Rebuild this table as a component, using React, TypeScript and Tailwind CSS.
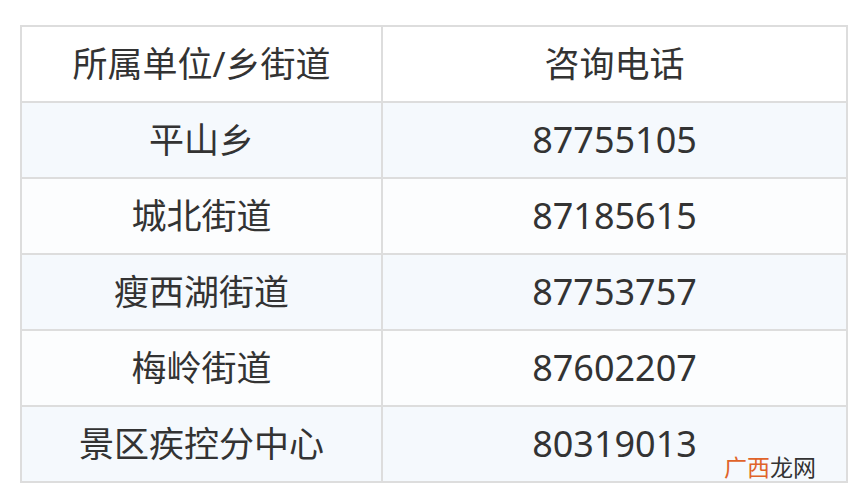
const rows = [
  { unit: "平山乡", phone: "87755105" },
  { unit: "城北街道", phone: "87185615" },
  { unit: "瘦西湖街道", phone: "87753757" },
  { unit: "梅岭街道", phone: "87602207" },
  { unit: "景区疾控分中心", phone: "80319013" },
];

export default function App() {
  return (
    <div className="relative h-[499px] w-[853px] bg-white pl-[20px] pt-[25px] font-['Noto_Sans','Noto_Sans_CJK_SC',sans-serif] text-[#333]">
      <table className="w-[828px] table-fixed border-collapse text-center text-[35px]">
        <colgroup>
          <col className="w-[361px]" />
          <col />
        </colgroup>
        <thead>
          <tr className="h-[76px] bg-white">
            <th className="border-2 border-[#dddddd] font-normal">所属单位/乡街道</th>
            <th className="border-2 border-[#dddddd] font-normal">咨询电话</th>
          </tr>
        </thead>
        <tbody>
          {rows.map((r, i) => (
            <tr
              key={r.phone}
              className={i % 2 === 0 ? "h-[76px] bg-[#f5f9fd]" : "h-[76px] bg-[#fcfdfe]"}
            >
              <td className="border-2 border-[#dddddd]">{r.unit}</td>
              <td className="border-2 border-[#dddddd] text-[36px]">{r.phone}</td>
            </tr>
          ))}
        </tbody>
      </table>

      {/* watermark */}
      <div className="absolute left-[724px] top-[455px] font-['Noto_Sans_CJK_SC',sans-serif] text-[23px] leading-none">
        <span className="text-[#e0642a]">广西</span>
        <span className="text-[#333]">龙网</span>
      </div>
    </div>
  );
}
